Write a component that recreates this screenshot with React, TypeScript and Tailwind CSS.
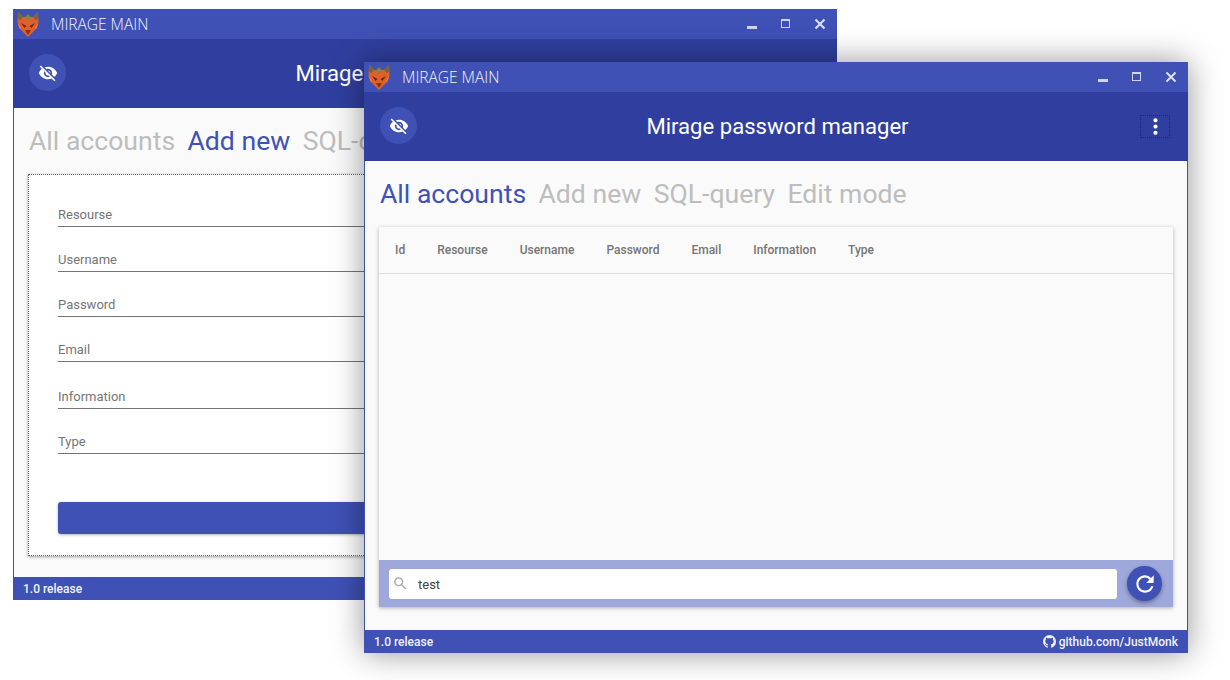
import React from "react";
import { MdVisibilityOff, MdRefresh, MdSearch, MdMoreVert } from "react-icons/md";
import { VscGithubInverted } from "react-icons/vsc";

function Fox() {
  return (
    <svg width="22" height="26" viewBox="0 0 22 26" className="ml-[2px] shrink-0">
      <path d="M1 1 L6 6 L16 6 L21 1 L21.5 12 L19 18 L11 26 L3 18 L0.5 12 Z" fill="#e0602a" />
      <path d="M1 1 L6 6 L3.5 9 L1 8 Z M21 1 L16 6 L18.5 9 L21 8 Z" fill="#77683a" />
      <path d="M8 6 L11 3 L14 6 L11 10 Z" fill="#8c7b3e" />
      <circle cx="11" cy="6.5" r="1.3" fill="#5f9a58" />
      <path d="M4 12 L9.5 15 L7.5 17 Z M18 12 L12.5 15 L14.5 17 Z" fill="#6b2a14" />
      <path d="M8 19 L14 19 L11 24 Z" fill="#8a3315" />
      <path d="M0.5 12 L4 17 L3 18 Z M21.5 12 L18 17 L19 18 Z" fill="#f08a3a" />
    </svg>
  );
}

function WindowButtons() {
  return (
    <div className="ml-auto flex items-center">
      <svg width="10" height="4" viewBox="0 0 10 4" className="mr-[24px] mt-[7px]">
        <rect width="10" height="3" fill="#cfd5f0" />
      </svg>
      <svg width="10" height="10" viewBox="0 0 10 10" className="mr-[23px] mb-[1px]">
        <rect x="0.5" y="0.5" width="8" height="8" fill="none" stroke="#cfd5f0" />
        <rect x="0" y="0" width="9" height="2" fill="#cfd5f0" />
      </svg>
      <svg width="12" height="12" viewBox="0 0 12 12" className="mr-[11px]">
        <path d="M1.5 1.5 L10.5 10.5 M10.5 1.5 L1.5 10.5" stroke="#dde1f5" strokeWidth="2" />
      </svg>
    </div>
  );
}

function Window({
  className,
  title,
  children,
  more,
  githubLink,
}: {
  className: string;
  title: string;
  children: React.ReactNode;
  more?: boolean;
  githubLink?: boolean;
}) {
  return (
    <div className={`absolute flex h-[591px] w-[824px] flex-col ${className}`}>
      <div className="flex h-[30px] shrink-0 items-center bg-[#3f51b5]">
        <div className="ml-[2px] w-[36px]">
          <Fox />
        </div>
        <span className="pt-[2px] text-[15.5px] font-light text-[#f2f3fb] [font-family:'Open_Sans',sans-serif]">
          {title}
        </span>
        <WindowButtons />
      </div>
      <div className="relative flex h-[69px] shrink-0 items-center justify-center bg-[#303f9f] pl-[3px] pt-[1px]">
        <div className="absolute left-[16px] top-[15px] flex h-[37px] w-[37px] items-center justify-center rounded-full bg-[#3f51b5] text-white">
          <MdVisibilityOff size={20} />
        </div>
        <span className="text-[22.1px] text-white">Mirage password manager</span>
        {more && (
          <div className="absolute right-[18px] top-[23px] flex h-[23px] w-[30px] items-center justify-center border border-dotted border-[#1a237e] text-white">
            <MdMoreVert size={25} />
          </div>
        )}
      </div>
      <div className="flex min-h-0 flex-1 flex-col border-x border-[#3f51b5] bg-[#fafafa]">{children}</div>
      <div className="flex h-[23px] shrink-0 items-center justify-between bg-[#3f51b5] pl-[10px] pr-[10px] text-[12px] text-[#f0f1fa]">
        <span className="font-medium">1.0 release</span>
        {githubLink && (
          <span className="flex items-center gap-[3px] font-medium">
            <VscGithubInverted size={13} />
            github.com/JustMonk
          </span>
        )}
      </div>
    </div>
  );
}

function Tabs({ active }: { active: number }) {
  const tabs = ["All accounts", "Add new", "SQL-query", "Edit mode"];
  return (
    <div className="flex h-[66px] shrink-0 items-center gap-[12.4px] pl-[15px] text-[26.6px]">
      {tabs.map((t, i) => (
        <span key={t} className={i === active ? "text-[#3f51b5]" : "text-[#bdbdbd]"}>
          {t}
        </span>
      ))}
    </div>
  );
}

function Field({ label, mb }: { label: string; mb: string }) {
  return (
    <div className={`h-[33px] border-b border-[#757575] pt-[13px] text-[13px] leading-[16px] text-[#757575] ${mb}`}>
      {label}
    </div>
  );
}

function AddForm() {
  return (
    <div className="mx-[14px] flex h-[382px] flex-col border border-dotted border-[#666] bg-white px-[29px] pt-[19px] shadow-[0_1px_3px_rgba(0,0,0,0.35)]">
      <Field label="Resourse" mb="mb-[12px]" />
      <Field label="Username" mb="mb-[12px]" />
      <Field label="Password" mb="mb-[12px]" />
      <Field label="Email" mb="mb-[14px]" />
      <Field label="Information" mb="mb-[12px]" />
      <Field label="Type" mb="mb-[48px]" />
      <div className="h-[32px] rounded-[3px] bg-[#3f51b5] shadow-[0_1px_3px_rgba(0,0,0,0.3)]" />
    </div>
  );
}

function AccountsTable() {
  const cols = ["Id", "Resourse", "Username", "Password", "Email", "Information", "Type"];
  return (
    <div className="mx-[14px] flex h-[380px] flex-col bg-[#fafafa] shadow-[0_1px_4px_rgba(0,0,0,0.3)]">
      <div className="flex h-[47px] shrink-0 items-center gap-[32px] border-b border-[#e0e0e0] pl-[16px] text-[12px] font-medium text-[#757575]">
        {cols.map((c) => (
          <span key={c}>{c}</span>
        ))}
      </div>
      <div className="min-h-0 flex-1" />
      <div className="flex h-[47px] shrink-0 items-center bg-[#9fa8da] pl-[10px] pr-[11px]">
        <div className="flex h-[30px] flex-1 items-center rounded-[3px] bg-white pl-[3px] text-[13px] text-[#424242]">
          <MdSearch size={17} className="text-[#a8a8a8]" />
          <span className="ml-[9px] pt-[2px]">test</span>
        </div>
        <div className="ml-[10px] flex h-[35px] w-[35px] items-center justify-center rounded-full bg-[#3f51b5] text-white shadow-[0_2px_4px_rgba(0,0,0,0.35)]">
          <MdRefresh size={26} />
        </div>
      </div>
    </div>
  );
}

export default function App() {
  return (
    <div className="relative h-[680px] w-[1230px] overflow-hidden bg-white [font-family:Roboto,sans-serif]">
      <Window className="left-[13px] top-[9px]" title="MIRAGE MAIN">
        <Tabs active={1} />
        <AddForm />
      </Window>
      <Window
        className="left-[364px] top-[62px] shadow-[0_0_30px_rgba(0,0,0,0.42)]"
        title="MIRAGE MAIN"
        more
        githubLink
      >
        <Tabs active={0} />
        <AccountsTable />
      </Window>
    </div>
  );
}
